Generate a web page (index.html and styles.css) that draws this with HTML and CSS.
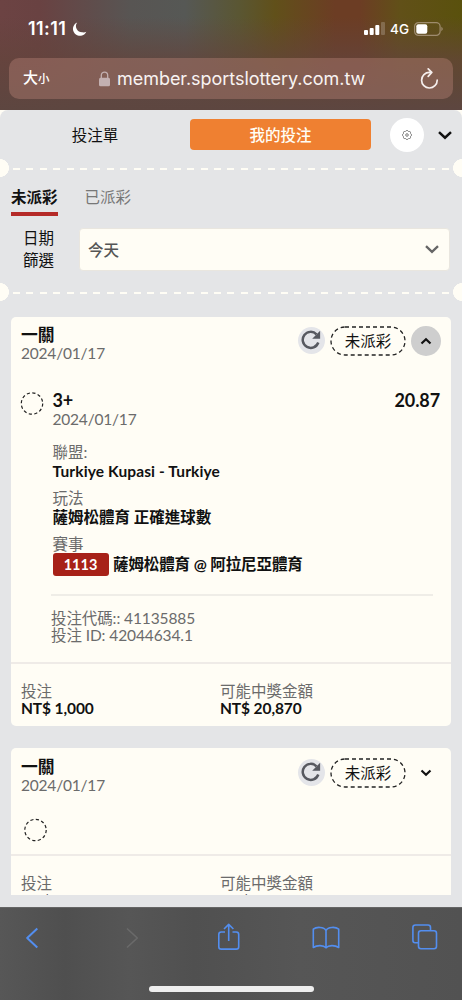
FILE: index.html
```html
<!DOCTYPE html>
<html lang="zh-Hant">
<head>
<meta charset="utf-8">
<meta name="viewport" content="width=device-width, initial-scale=1">
<title>我的投注</title>
<link rel="stylesheet" href="styles.css">
</head>
<body>
<div class="phone">
  <header class="chrome">
    <div class="status">
      <span class="time">11:11</span>
      <svg class="moon" width="15" height="15" viewBox="0 0 15 15"><path d="M5.200 .4A7 7 0 1 0 14.300 9.800 5.300 5.300 0 0 1 10.500 10.300 6.200 6.200 0 0 1 5.200 .4Z" fill="#fff"/></svg>
      <svg class="signal" width="21" height="14" viewBox="0 0 21 14"><g fill="#fff"><rect x="0" y="8" width="4" height="5" rx="1"/><rect x="5.700" y="6" width="4" height="7" rx="1"/><rect x="11.300" y="3" width="4" height="10" rx="1"/><rect x="17" y="0" width="4" height="13" rx="1" opacity=".2"/></g></svg>
      <span class="net">4G</span>
      <svg class="battery" width="30" height="14" viewBox="0 0 30 14"><rect x=".6" y=".6" width="25.500" height="12.800" rx="4" fill="none" stroke="#b3a08a" stroke-opacity=".75" stroke-width="1.200"/><rect x="2.300" y="2.300" width="11" height="9.400" rx="2" fill="#fff"/><path d="M27.500 4.800q2.200 2.200 0 4.400z" fill="#b3a08a"/></svg>
    </div>
    <div class="address">
      <span class="size-label"><span>大</span><small>小</small></span>
      <svg class="lock" width="11" height="16" viewBox="0 0 11 16"><path d="M2.300 8V4.300a3.200 3.200 0 0 1 6.400 0V8" fill="none" stroke="#c3b0b1" stroke-width="1.300"/><rect x="0" y="6.700" width="11" height="8.600" rx="1.500" fill="#c3b0b1"/></svg>
      <span class="url">member.sportslottery.com.tw</span>
      <svg class="reload" width="20" height="22" viewBox="0 0 20 22"><path d="M12.500 4.400H10.500A7.800 7.800 0 1 0 18.200 12.200M9.200 .9l3.600 3.500-3.600 3.900" fill="none" stroke="#f5eeec" stroke-width="1.700" stroke-linecap="round" stroke-linejoin="round"/></svg>
    </div>
  </header>

  <main class="page">
    <div class="sheet">
      <nav class="switch">
        <span class="switch-item">投注單</span>
        <span class="switch-item active">我的投注</span>
        <span class="gear"><svg width="10" height="10" viewBox="0 0 10 10" fill="none" stroke="#555" stroke-width=".75"><path d="M4.200.7Q5 .2 5.800.7L6.500 1.500 7.700 1.500Q8.500 1.600 8.500 2.500L8.600 3.500 9.300 4.200Q9.700 5 9.300 5.800L8.500 6.500 8.500 7.700Q8.400 8.500 7.500 8.500L6.500 8.600 5.800 9.300Q5 9.700 4.200 9.300L3.500 8.500 2.300 8.500Q1.500 8.400 1.500 7.500L1.400 6.500.7 5.800Q.3 5 .7 4.200L1.500 3.500 1.500 2.300Q1.600 1.500 2.500 1.500L3.500 1.400Z"/><circle cx="5" cy="5" r="1.300"/></svg></span>
        <svg class="chev" width="14" height="9" viewBox="0 0 14 9"><path d="M1 1.200 7 6.700 13 1.200" fill="none" stroke="#111" stroke-width="2.500"/></svg>
      </nav>
      <div class="perforation"></div>
      <div class="tabs"><span class="tab selected">未派彩</span><span class="tab">已派彩</span></div>
      <div class="filter">
        <span class="filter-label">日期<br>篩選</span>
        <div class="select"><span>今天</span><svg width="14" height="9" viewBox="0 0 14 9"><path d="M1 1.200 7 6.900 13 1.200" fill="none" stroke="#666" stroke-width="2.300"/></svg></div>
      </div>
      <div class="perforation"></div>

      <article class="card">
        <div class="card-head">
          <div class="heading"><h2>一關</h2><p>2024/01/17</p></div>
          <span class="refresh"><svg width="20" height="20" viewBox="0 0 20 20"><path d="M17.300 12.500A8 8 0 1 1 15.500 4.300" fill="none" stroke="#575960" stroke-width="2.500"/><path d="M19.100 .8v7.900h-7.900Z" fill="#575960"/></svg></span>
          <span class="pill"><svg width="76" height="30"><rect x="1" y="1" width="74" height="28" rx="14" fill="none" stroke="#222" stroke-width="1.300" stroke-dasharray="4 3"/></svg><b>未派彩</b></span>
          <span class="toggle open"><svg width="12" height="8" viewBox="0 0 12 8"><path d="M1.500 6.500 6 2.300 10.500 6.500" fill="none" stroke="#111" stroke-width="2.200"/></svg></span>
        </div>
        <div class="leg">
          <svg class="ring" width="24" height="24"><circle cx="12" cy="12.500" r="10.700" fill="none" stroke="#222" stroke-width="1.200" stroke-dasharray="3.200 2.400"/></svg>
          <div class="leg-body">
            <div class="pick"><strong>3+</strong><strong>20.87</strong></div>
            <p class="muted">2024/01/17</p>
            <dl>
              <dt>聯盟:</dt><dd class="league">Turkiye Kupasi - Turkiye</dd>
              <dt>玩法</dt><dd>薩姆松體育 正確進球數</dd>
              <dt>賽事</dt><dd class="match"><span class="code">1113</span><span>薩姆松體育 @ 阿拉尼亞體育</span></dd>
            </dl>
            <div class="ids"><p>投注代碼:: 41135885</p><p>投注 ID: 42044634.1</p></div>
          </div>
        </div>
        <footer class="totals">
          <div><p>投注</p><strong>NT$ 1,000</strong></div>
          <div><p>可能中獎金額</p><strong>NT$ 20,870</strong></div>
        </footer>
      </article>

      <article class="card">
        <div class="card-head">
          <div class="heading"><h2>一關</h2><p>2024/01/17</p></div>
          <span class="refresh"><svg width="20" height="20" viewBox="0 0 20 20"><path d="M17.300 12.500A8 8 0 1 1 15.500 4.300" fill="none" stroke="#575960" stroke-width="2.500"/><path d="M19.100 .8v7.900h-7.900Z" fill="#575960"/></svg></span>
          <span class="pill"><svg width="76" height="30"><rect x="1" y="1" width="74" height="28" rx="14" fill="none" stroke="#222" stroke-width="1.300" stroke-dasharray="4 3"/></svg><b>未派彩</b></span>
          <span class="toggle"><svg width="12" height="8" viewBox="0 0 12 8"><path d="M1.500 1.500 6 5.700 10.500 1.500" fill="none" stroke="#111" stroke-width="2.200"/></svg></span>
        </div>
        <div class="collapsed"><svg width="24" height="24"><circle cx="12.500" cy="12" r="10.700" fill="none" stroke="#222" stroke-width="1.200" stroke-dasharray="3.200 2.400"/></svg></div>
        <footer class="totals">
          <div><p>投注</p><strong>NT$ 1,000</strong></div>
          <div><p>可能中獎金額</p><strong>NT$ 20,870</strong></div>
        </footer>
      </article>
    </div>
  </main>

  <footer class="toolbar">
    <div class="tools">
      <svg width="14" height="22" viewBox="0 0 14 22"><path d="M11.300 1.500 1.200 11l10.100 9.500" stroke-width="2"/></svg>
      <svg class="disabled" width="14" height="22" viewBox="0 0 14 22"><path d="M1 1.500 11.300 11 1 20.500" stroke-width="1.600"/></svg>
      <svg width="24" height="28" viewBox="0 0 24 28"><path d="M8 9H4.200Q1.800 9 1.800 11.400V23.700Q1.800 26.100 4.200 26.100H19.300Q21.700 26.100 21.700 23.700V11.400Q21.700 9 19.300 9H15.500M11.700 18V1.600M7 6 11.700 1.400 16.400 6"/></svg>
      <svg width="28" height="24" viewBox="0 0 28 24"><path d="M14 4.500C12 .8 4.500 .5 1.300 3.200V21.500C5 19 11.500 19 14 21.800 16.500 19 23 19 26.700 21.500V3.200C23.500 .5 16 .8 14 4.500ZM14 4.500V21.500"/></svg>
      <svg width="26" height="26" viewBox="0 0 26 26"><path d="M6.500 18.800H3Q.9 18.800 .9 16.300V3.500Q.9 1 3.500 1H16Q18.500 1 18.500 3.500V6.500"/><rect x="6.500" y="6.800" width="18" height="18" rx="2.500"/></svg>
    </div>
    <div class="home"></div>
  </footer>
</div>
</body>
</html>
```
FILE: styles.css
```css
* { box-sizing: border-box; }
body { margin: 0; font: 15.5px/18px Lato, "Noto Sans CJK TC", sans-serif; color: #111; background: #e4e5e7; }
h2, p, dl, dd { margin: 0; }
svg { display: block; flex: none; }
.phone { width: 462px; height: 1000px; display: flex; flex-direction: column; overflow: hidden; }

.chrome {
  height: 110px; flex: none; color: #fff; font-family: Inter, "Noto Sans CJK TC", sans-serif;
  background:
    linear-gradient(rgba(99,68,60,0) 15%, rgba(99,68,60,.75) 55%, #5d4640 100%),
    linear-gradient(90deg, #6c4343 0, #694242 40px, #585553 130px, #565855 185px, #5a5632 240px, #61501a 275px, #6c3d24 335px, #6c3d24 360px, #615018 400px, #5a510d 462px);
}
.status { height: 58px; display: flex; align-items: center; padding: 0 18px 0 28px; }
.time { font-size: 18px; font-weight: 600; letter-spacing: .45px; width: 44px; white-space: nowrap; }
.status .signal { margin-left: auto; }
.net { font-size: 13.5px; font-weight: 500; margin: 0 5px 0 5px; }
.address { height: 41px; margin: 0 9px; padding: 0 14px 0 14px; display: flex; align-items: center; border-radius: 10px; background: rgba(181,128,116,.42); }
.size-label { display: flex; align-items: baseline; width: 76px; font-size: 15px; font-weight: 500; }
.size-label small { font-size: 11.5px; }
.url { font-size: 18px; margin-left: 7px; letter-spacing: -.04px; color: #f8f3f2; white-space: nowrap; }
.reload { margin-left: auto; }

.page { height: 797px; flex: none; background: #fffdf5; overflow: hidden; }
.sheet { height: 100%; background: #e4e5e7; border-radius: 8px 8px 0 0; overflow: hidden; border-bottom: 12px solid #e4e5e7; }
.switch { height: 49px; display: grid; grid-template-columns: 190px 181px 19px 34px 14px 14px 10px; align-items: center; }
.switch-item { text-align: center; font-weight: 400; }
.active { height: 31px; line-height: 32px; border-radius: 4px; background: #ef8031; color: #fffdf5; font-weight: 500; }
.gear { grid-column: 4; width: 34px; height: 34px; border-radius: 50%; background: #fff; display: grid; place-items: center; }
.chev { grid-column: 6; margin-top: 1px; }
.perforation {
  height: 18px;
  background:
    radial-gradient(circle at 0 50%, #fffdf5 8.7px, transparent 9.2px),
    radial-gradient(circle at 100% 50%, #fffdf5 8.7px, transparent 9.2px),
    repeating-linear-gradient(90deg, #fffdf5 0 7px, transparent 7px 13.4px) 13px 9px / 436px 2px no-repeat;
}
.tabs { height: 51px; display: flex; gap: 27px; padding: 11px 11px 0; color: #777; }
.tab { height: 28px; line-height: 19px; }
.selected { color: #111; font-weight: 700; border-bottom: 4px solid #b52a28; }
.filter { height: 55px; display: flex; padding-left: 23px; }
.filter-label { width: 56px; line-height: 22px; margin-top: -1px; }
.select { width: 371px; flex: none; height: 43px; padding: 0 10px 0 8px; display: flex; align-items: center; justify-content: space-between; background: #fffdf5; border: 1px solid #e9e6df; border-radius: 4px; color: #555; font-weight: 500; }

.card { width: 440px; margin: 16px 0 0 11px; border-radius: 5px; background: #fffdf5; overflow: hidden; }
.card + .card { margin-top: 22px; }
.card-head { height: 74px; padding: 9px 10px 0; display: flex; }
.card + .card .card-head { padding-top: 10px; height: 75px; }
.heading { width: 277px; color: #6b6b6b; letter-spacing: -.2px; }
h2 { font-size: 16.8px; line-height: 18px; color: #111; font-weight: 700; letter-spacing: 0; }
.refresh { width: 27px; height: 27px; border-radius: 50%; background: #e4e5e9; display: grid; place-items: center; margin: 1px 5px 0 0; }
.refresh svg { margin-left: -1px; margin-top: -1px; }
.pill { display: grid; place-items: center; width: 76px; height: 30px; margin-right: 5px; }
.pill > * { grid-area: 1 / 1; }
.pill b { font-weight: 400; }
.toggle { width: 30px; height: 30px; border-radius: 50%; display: grid; place-items: center; }
.open { background: #cecece; }
.leg { height: 271px; display: flex; padding: 0 11px 0 9px; }
.ring { margin-right: 8.5px; }
.leg-body { flex: 1; }
.pick { display: flex; justify-content: space-between; font-size: 18px; line-height: 19px; letter-spacing: -.1px; }
.muted, dt, .ids, .totals p { color: #6b6b6b; }
.muted { letter-spacing: -.2px; }
dl { padding-top: 15px; }
dt { font-weight: 400; height: 18px; }
dd { height: 28px; line-height: 20px; font-weight: 700; white-space: nowrap; }
.league { letter-spacing: .12px; }
.match { display: flex; height: 41px; gap: 4.5px; line-height: 23px; letter-spacing: -.1px; }
.code { width: 56px; height: 23px; text-align: center; font-size: 14.5px; color: #fff; background: #a72118; border-radius: 3px; letter-spacing: 0; }
.ids { width: 382px; margin-left: -1.5px; padding-top: 14px; border-top: 2px solid #efede7; line-height: 17px; letter-spacing: -.1px; }
.totals { height: 64px; border-top: 2px solid #efebe7; padding: 19px 10px 0; display: grid; grid-template-columns: 199px 1fr; line-height: 17px; }
.totals strong { display: block; letter-spacing: -.1px; }
.collapsed { height: 31px; padding-left: 12px; margin-top: -5px; }
.card:last-child .totals { margin-top: 5px; }
.card:last-child .totals strong { padding-top: 1px; }

.toolbar { height: 93px; flex: none; background: linear-gradient(90deg, #575757, #4f4f4f 14%, #565656 28%, #505050 42%, #565656 65%, #525252); border-top: 1px solid #656565; }
.tools { height: 80px; display: grid; grid-template-columns: 26px 100px 91px 95px 100px 40px; align-items: start; padding-top: 15px; }
.tools svg { fill: none; stroke: #538eef; stroke-width: 1.6; stroke-linejoin: round; }
.tools svg:first-child { grid-column: 1; margin: 4px 0 0 26px; }
.tools .disabled { grid-column: 2; stroke: #6a6a6a; margin: 4px 0 0 100px; }
.tools svg:nth-child(3) { grid-column: 4; margin-left: 0; }
.tools svg:nth-child(4) { grid-column: 5; margin-top: 3px; }
.tools svg:nth-child(5) { grid-column: 6; margin-top: 1px; }
.home { width: 165px; height: 6px; margin: -2px auto 0; border-radius: 3px; background: #eee; }
```
